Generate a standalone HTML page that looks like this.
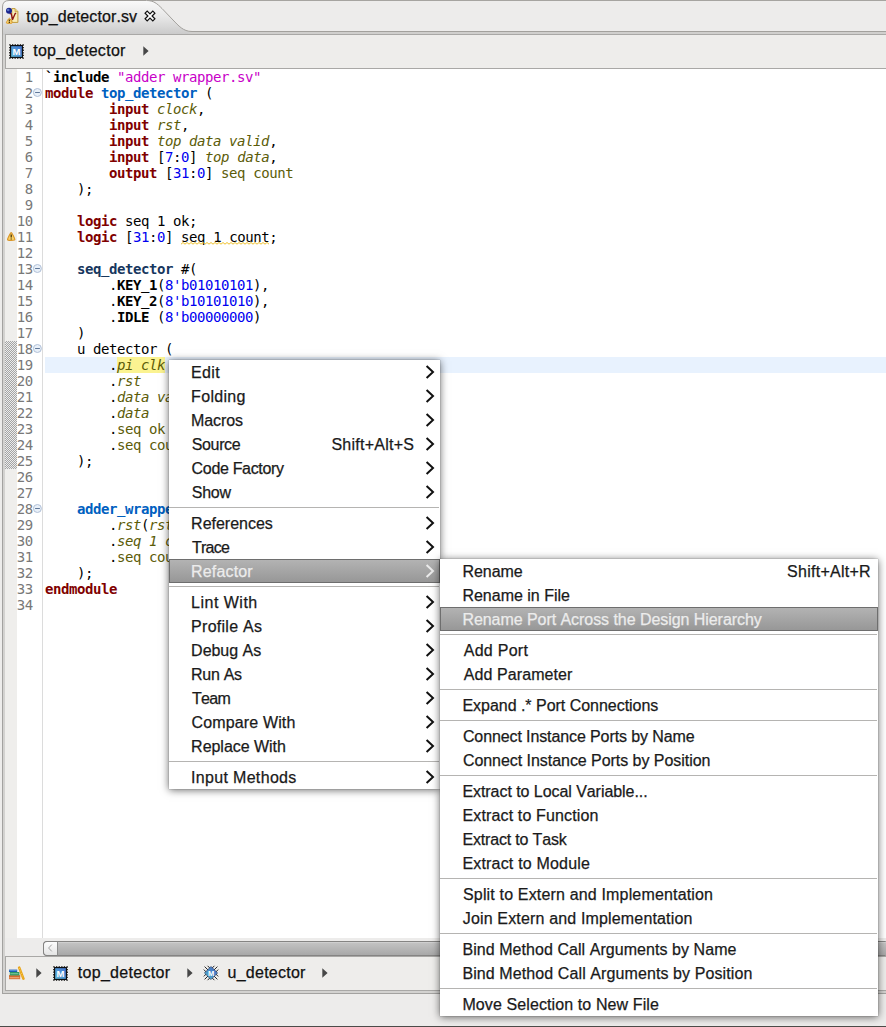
<!DOCTYPE html>
<html><head><meta charset="utf-8"><title>top_detector.sv</title>
<style>
*{box-sizing:border-box;margin:0;padding:0}
html,body{width:886px;height:1027px;overflow:hidden;background:#edeceb}
body{font-kerning:none;position:relative;font-family:"Liberation Sans","DejaVu Sans",sans-serif;font-size:15px;color:#1a1a1a}
.abs{position:absolute}
/* tab bar */
#tabline{left:0;top:0;width:886px;height:35px}
.ui{-webkit-text-stroke:.25px currentColor;font-family:"Liberation Sans","DejaVu Sans",sans-serif;font-size:16px;line-height:20px;white-space:pre;color:#111}
/* breadcrumb */
#crumb{left:5px;top:34px;width:886px;height:35px;border:1px solid #a9a8a6;border-right:0;background:#eeedeb}
/* editor */
#ed{left:5px;top:69px;width:881px;height:869px;background:#fff}
#ruler{left:5px;top:69px;width:12px;height:869px;background:#efeeec}
#rulersel{left:5px;top:341px;width:12px;height:128px;background:#c9c8c6;background-image:repeating-conic-gradient(#a4a4a4 0 25%,#ececec 0 50%);background-size:2px 2px}
#numsep{left:42px;top:69px;width:1px;height:869px;background:#dcdcdc}
.ln{position:absolute;left:17px;width:869px;height:16px;line-height:16px;font-family:"DejaVu Sans Mono","Liberation Mono",monospace;font-size:14px;white-space:pre;overflow:hidden;color:#000}
.ln.cur .tx{background:#e8f2fe}
.no{position:absolute;left:-1.3px;top:0;width:17px;text-align:right;color:#787878;letter-spacing:-.428px}
.tx{position:absolute;left:28px;top:0;width:841px;height:16px;letter-spacing:-.428px}
.u{color:transparent;font-style:inherit}
.k{color:#7f0000;font-weight:bold}
.m{color:#0060c0;font-weight:bold}
.b{font-weight:bold}
.d{color:#17375e}
.s{color:#c800c8}
.n{color:#0000f0}
.p{color:#5c5c08;font-style:italic}
.o{color:#5c5c08}
.h{background:#fbf391;padding-bottom:1px}
.fold{position:absolute;left:32px}
/* scrollbar */
#hs{left:43px;top:941px;width:843px;height:15px;background:#d6d5d3;border:1px solid #858483;border-radius:4px 0 0 4px}
/* bottom crumb */
/* menus */
.menu{position:absolute;background:#fff;box-shadow:0 0 1px rgba(0,0,0,.45),0 1px 8px rgba(0,0,0,.6)}
.mi{-webkit-text-stroke:.25px currentColor;position:relative;height:24px;line-height:24px;font-size:16px;white-space:pre;color:#1a1a1a}
.mi .lb{position:absolute;left:22px;top:.5px}
.mi .acc{position:absolute;top:.5px}
.mi .arr{position:absolute;right:5px;top:5px;color:#111}
.mi.sel{color:#ececec;background:linear-gradient(#b4b4b4,#969696);box-shadow:inset 0 0 0 1px #6e6e6e}
.mi.sel .arr{color:#ececec}
.sep{height:1px;background:#b5b4b2;margin:3px 1px 3px 0}
#m1{left:169px;top:360px;width:271px;height:429px}
#m1 .acc{right:26px}
#m2{left:440px;top:559px;width:438px;height:457px}
#m2 .acc{right:8px}
</style></head><body>
<!-- tab bar -->
<svg id="tabline" class="abs" width="886" height="35" viewBox="0 0 886 35">
<defs><linearGradient id="tg" x1="0" y1="0" x2="0" y2="1"><stop offset="0" stop-color="#fafafa"/><stop offset=".5" stop-color="#e6e6e6"/><stop offset="1" stop-color="#c9c9c9"/></linearGradient></defs>
<path d="M2.5 35 V7 Q2.5 .5 9 .5 H146.5 C153.5 .5 157 3.5 162 8.5 L173 20 C178.5 25.5 183 31.5 192 31.5 H886 V35 Z" fill="url(#tg)"/>
<path d="M192 31.5 H886 V35 H186 Z" fill="#d0cfcd"/>
<path d="M2.5 35 V7 Q2.5 .5 9 .5 H146.5 C153.5 .5 157 3.5 162 8.5 L173 20 C178.5 25.5 183 31.5 192 31.5 H886" fill="none" stroke="#a3a19d" stroke-width="1"/>
<path d="M148 .5 H886" stroke="#a6a4a0" stroke-width="1"/>
</svg>
<div class="abs ui" style="left:26.28px;top:7px;letter-spacing:0.103px">top_detector.sv</div>
<!-- tab file icon -->
<svg class="abs" style="left:5px;top:7px" width="15" height="18" viewBox="0 0 15 18">
<path d="M6.8 1.6 H10 L12.9 4.6 V15.4 H6.8 Z" fill="#f8ecb8" stroke="#c09a3c" stroke-width="1"/>
<path d="M10 1.6 V4.6 H12.9" fill="#e9cf86" stroke="#c7a244" stroke-width=".8"/>
<path d="M4.6 6.6 H6.2 L7.6 12.4 L10.2 6.4 H11.2" fill="none" stroke="#8e1414" stroke-width="1.35" stroke-linejoin="round"/>
<circle cx="4" cy="3.8" r="3" fill="#18238e"/>
<circle cx="3.2" cy="3" r="1.3" fill="#5b78c4"/>
<path d="M4.3 11.2 C4.9 11.2 7.2 15 7.2 15.7 C7.2 16.3 6.8 16.4 4.3 16.4 C1.8 16.4 1.4 16.3 1.4 15.7 C1.4 15 3.7 11.2 4.3 11.2 Z" fill="#f9d36c" stroke="#dc9a2c" stroke-width="1"/>
<path d="M4.3 12.6 V14.4 M4.3 15 V15.9" stroke="#2a1c00" stroke-width="1.1"/>
</svg>
<!-- close X -->
<svg class="abs" style="left:144px;top:10px" width="12" height="12" viewBox="0 0 12 12">
<path d="M1.1 3.2 L3.2 1.1 L6 3.9 L8.8 1.1 L10.9 3.2 L8.1 6 L10.9 8.8 L8.8 10.9 L6 8.1 L3.2 10.9 L1.1 8.8 L3.9 6 Z" fill="#ffffff" stroke="#101010" stroke-width="1.2" stroke-linejoin="miter"/>
</svg>
<!-- breadcrumb -->
<div id="crumb" class="abs"></div>
<svg class="abs" style="left:8.5px;top:43.5px" width="15" height="15" viewBox="0 0 15 15">
<defs><linearGradient id="mg1" x1="1" y1="0" x2="0" y2="1"><stop offset="0" stop-color="#3f6fd0"/><stop offset="1" stop-color="#62bbd8"/></linearGradient></defs>
<rect x="1" y="1" width="13" height="13" fill="none" stroke="#0a0a0a" stroke-width="1.6" stroke-dasharray="1.3 1.3" stroke-dashoffset=".6"/>
<rect x="1.6" y="1.6" width="11.8" height="11.8" fill="url(#mg1)" stroke="#0a0a0a" stroke-width="1.1"/>
<text x="7.5" y="11.3" font-family="Liberation Sans,sans-serif" font-size="9.5" font-weight="bold" fill="#fff" text-anchor="middle">M</text>
</svg>
<div class="abs ui" style="left:33.18px;top:41px;letter-spacing:0.3px">top_detector</div>
<svg class="abs" style="left:143px;top:45.7px" width="6" height="10" viewBox="0 0 6 10"><path d="M.3 .2 L5.6 5 L.3 9.8z" fill="#474747"/></svg>
<!-- editor -->
<div id="ed" class="abs"></div>
<div id="ruler" class="abs"></div>
<div id="rulersel" class="abs"></div>
<div id="numsep" class="abs"></div>
<div class="ln" style="top:69px"><span class="no">1</span><span class="tx"><span class="b">`include</span> <span class="s">"adder<i class="u">_</i>wrapper.sv"</span></span></div>
<div class="ln" style="top:85px"><span class="no">2</span><span class="tx"><span class="k">module</span> <span class="m">top_detector</span> (</span></div>
<div class="ln" style="top:101px"><span class="no">3</span><span class="tx">        <span class="k">input</span> <span class="p">clock</span>,</span></div>
<div class="ln" style="top:117px"><span class="no">4</span><span class="tx">        <span class="k">input</span> <span class="p">rst</span>,</span></div>
<div class="ln" style="top:133px"><span class="no">5</span><span class="tx">        <span class="k">input</span> <span class="p">top<i class="u">_</i>data<i class="u">_</i>valid</span>,</span></div>
<div class="ln" style="top:149px"><span class="no">6</span><span class="tx">        <span class="k">input</span> [<span class="n">7</span>:<span class="n">0</span>] <span class="p">top<i class="u">_</i>data</span>,</span></div>
<div class="ln" style="top:165px"><span class="no">7</span><span class="tx">        <span class="k">output</span> [<span class="n">31</span>:<span class="n">0</span>] <span class="o">seq<i class="u">_</i>count</span></span></div>
<div class="ln" style="top:181px"><span class="no">8</span><span class="tx">    );</span></div>
<div class="ln" style="top:197px"><span class="no">9</span><span class="tx"></span></div>
<div class="ln" style="top:213px"><span class="no">10</span><span class="tx">    <span class="k">logic</span> seq<i class="u">_</i>1<i class="u">_</i>ok;</span></div>
<div class="ln" style="top:229px"><span class="no">11</span><span class="tx">    <span class="k">logic</span> [<span class="n">31</span>:<span class="n">0</span>] <span class="w">seq<i class="u">_</i>1<i class="u">_</i>count</span>;</span></div>
<div class="ln" style="top:245px"><span class="no">12</span><span class="tx"></span></div>
<div class="ln" style="top:261px"><span class="no">13</span><span class="tx">    <span class="m d">seq_detector</span> #(</span></div>
<div class="ln" style="top:277px"><span class="no">14</span><span class="tx">        .<span class="b">KEY_1</span>(<span class="n">8'b01010101</span>),</span></div>
<div class="ln" style="top:293px"><span class="no">15</span><span class="tx">        .<span class="b">KEY_2</span>(<span class="n">8'b10101010</span>),</span></div>
<div class="ln" style="top:309px"><span class="no">16</span><span class="tx">        .<span class="b">IDLE</span> (<span class="n">8'b00000000</span>)</span></div>
<div class="ln" style="top:325px"><span class="no">17</span><span class="tx">    )</span></div>
<div class="ln" style="top:341px"><span class="no">18</span><span class="tx">    u<i class="u">_</i>detector (</span></div>
<div class="ln cur" style="top:357px"><span class="no">19</span><span class="tx">        .<span class="p h">pi<i class="u">_</i>clk</span></span></div>
<div class="ln" style="top:373px"><span class="no">20</span><span class="tx">        .<span class="p">rst</span></span></div>
<div class="ln" style="top:389px"><span class="no">21</span><span class="tx">        .<span class="p">data<i class="u">_</i>valid</span></span></div>
<div class="ln" style="top:405px"><span class="no">22</span><span class="tx">        .<span class="p">data</span></span></div>
<div class="ln" style="top:421px"><span class="no">23</span><span class="tx">        .<span class="o">seq<i class="u">_</i>ok</span></span></div>
<div class="ln" style="top:437px"><span class="no">24</span><span class="tx">        .<span class="o">seq<i class="u">_</i>count</span></span></div>
<div class="ln" style="top:453px"><span class="no">25</span><span class="tx">    );</span></div>
<div class="ln" style="top:469px"><span class="no">26</span><span class="tx"></span></div>
<div class="ln" style="top:485px"><span class="no">27</span><span class="tx"></span></div>
<div class="ln" style="top:501px"><span class="no">28</span><span class="tx">    <span class="m">adder_wrapper</span></span></div>
<div class="ln" style="top:517px"><span class="no">29</span><span class="tx">        .<span class="p">rst</span>(<span class="p">rst</span></span></div>
<div class="ln" style="top:533px"><span class="no">30</span><span class="tx">        .<span class="p">seq<i class="u">_</i>1<i class="u">_</i>count</span></span></div>
<div class="ln" style="top:549px"><span class="no">31</span><span class="tx">        .<span class="o">seq<i class="u">_</i>count</span></span></div>
<div class="ln" style="top:565px"><span class="no">32</span><span class="tx">    );</span></div>
<div class="ln" style="top:581px"><span class="no">33</span><span class="tx"><span class="k">endmodule</span></span></div>
<div class="ln" style="top:597px"><span class="no">34</span><span class="tx"></span></div>

<svg class="fold" style="top:88px" width="11" height="10" viewBox="0 0 11 10"><circle cx="5.4" cy="4.5" r="4" fill="#e9f0f8" stroke="#b0c0d8" stroke-width="1"/><path d="M3.1 4.5h4.8" stroke="#60789a" stroke-width="1"/></svg>
<svg class="fold" style="top:264px" width="11" height="10" viewBox="0 0 11 10"><circle cx="5.4" cy="4.5" r="4" fill="#e9f0f8" stroke="#b0c0d8" stroke-width="1"/><path d="M3.1 4.5h4.8" stroke="#60789a" stroke-width="1"/></svg>
<svg class="fold" style="top:344px" width="11" height="10" viewBox="0 0 11 10"><circle cx="5.4" cy="4.5" r="4" fill="#e9f0f8" stroke="#b0c0d8" stroke-width="1"/><path d="M3.1 4.5h4.8" stroke="#60789a" stroke-width="1"/></svg>
<svg class="fold" style="top:504px" width="11" height="10" viewBox="0 0 11 10"><circle cx="5.4" cy="4.5" r="4" fill="#e9f0f8" stroke="#b0c0d8" stroke-width="1"/><path d="M3.1 4.5h4.8" stroke="#60789a" stroke-width="1"/></svg>

<!-- warning marker line 11 -->
<svg class="abs" style="left:6px;top:231px" width="11" height="11" viewBox="0 0 11 11">
<path d="M5.2 1.6 C5.9 1.6 8.9 7.4 8.9 8.6 C8.9 9.3 8.4 9.5 5.2 9.5 C2 9.5 1.5 9.3 1.5 8.6 C1.5 7.4 4.5 1.6 5.2 1.6 Z" fill="#f9d065" stroke="#d9962a" stroke-width="1.1"/>
<path d="M5.2 3.6 V6.6 M5.2 7.4 V8.5" stroke="#3a2800" stroke-width="1.2"/>
</svg>
<svg class="abs" style="left:180px;top:241px" width="90" height="5" viewBox="0 0 90 5"><path d="M1 3.2 l2 -1.7 l2 1.7 l2 -1.7 l2 1.7 l2 -1.7 l2 1.7 l2 -1.7 l2 1.7 l2 -1.7 l2 1.7 l2 -1.7 l2 1.7 l2 -1.7 l2 1.7 l2 -1.7 l2 1.7 l2 -1.7 l2 1.7 l2 -1.7 l2 1.7 l2 -1.7 l2 1.7 l2 -1.7 l2 1.7 l2 -1.7 l2 1.7 l2 -1.7 l2 1.7 l2 -1.7 l2 1.7 l2 -1.7 l2 1.7 l2 -1.7 l2 1.7 l2 -1.7 l2 1.7 l2 -1.7 l2 1.7 l2 -1.7 l2 1.7 l2 -1.7 l2 1.7 l2 -1.7 l2 1.7" fill="none" stroke="#efc12a" stroke-width="1"/></svg>
<!-- h scrollbar -->
<div id="hs" class="abs"></div>
<div class="abs" style="left:43px;top:941px;width:15px;height:15px;border:1px solid #858483;border-right-color:#8c8c8c;border-radius:4px 0 0 4px;background:linear-gradient(#fdfdfd,#e4e4e4)"></div>
<svg class="abs" style="left:47px;top:944px" width="6" height="8" viewBox="0 0 6 8"><path d="M4.8 .6 L1.6 4 L4.8 7.4" fill="none" stroke="#a0a0a0" stroke-width="1"/></svg>
<div class="abs" style="left:58px;top:942px;width:828px;height:13px;background:linear-gradient(#c4c4c4,#a8a8a8);box-shadow:inset 0 1px 0 #cfcfcf"></div>
<!-- bottom crumb -->
<div class="abs" style="left:2px;top:34px;width:1px;height:960px;background:#a3a2a0"></div>
<div class="abs" style="left:3px;top:35px;width:2px;height:958px;background:#d3d2d0"></div>
<div class="abs" style="left:5px;top:956px;width:881px;height:35px;border:1px solid #a9a8a6;border-right:0;background:#eeedeb"></div>
<div class="abs" style="left:3px;top:991px;width:883px;height:2px;background:#d3d2d0"></div>
<div class="abs" style="left:2px;top:993px;width:884px;height:1px;background:#a3a2a0"></div>
<div class="abs" style="left:0;top:1026px;width:886px;height:1px;background:#4c4b49"></div>
<svg class="abs" style="left:8px;top:966px" width="17" height="14" viewBox="0 0 17 14">
<rect x="1" y="9.4" width="11.2" height="3.8" fill="#d9783a"/><rect x="1" y="9.4" width="11.2" height="1" fill="#c65a1e"/><rect x="1.6" y="11" width="9.6" height="1.2" fill="#eaa070"/>
<rect x="1.8" y="6" width="9.6" height="3.4" fill="#2f9a62"/><rect x="2.4" y="7.2" width="8" height="1" fill="#7cc8a0"/>
<rect x="1" y="3.6" width="8.2" height="2.4" fill="#1f5fb4"/><rect x="1.4" y="4.2" width="7.4" height=".8" fill="#5c9ae0"/>
<path d="M11.2 1.6 L15.4 12.6" stroke="#e9a51c" stroke-width="2.6" stroke-linecap="round"/>
<path d="M11.4 2 L15.2 12.2" stroke="#f8d050" stroke-width=".9" stroke-dasharray="1.2 1.4"/>
</svg>
<svg class="abs" style="left:36px;top:967.6px" width="6" height="10" viewBox="0 0 6 10"><path d="M.3 .2 L5.6 5 L.3 9.8z" fill="#474747"/></svg>
<svg class="abs" style="left:52.7px;top:965.5px" width="15" height="15" viewBox="0 0 15 15">
<defs><linearGradient id="mg2" x1="1" y1="0" x2="0" y2="1"><stop offset="0" stop-color="#3f6fd0"/><stop offset="1" stop-color="#62bbd8"/></linearGradient></defs>
<rect x="1" y="1" width="13" height="13" fill="none" stroke="#0a0a0a" stroke-width="1.6" stroke-dasharray="1.3 1.3" stroke-dashoffset=".6"/>
<rect x="1.6" y="1.6" width="11.8" height="11.8" fill="url(#mg2)" stroke="#0a0a0a" stroke-width="1.1"/>
<text x="7.5" y="11.3" font-family="Liberation Sans,sans-serif" font-size="9.5" font-weight="bold" fill="#fff" text-anchor="middle">M</text>
</svg>
<div class="abs ui" style="left:77.78px;top:963px;letter-spacing:0.3px">top_detector</div>
<svg class="abs" style="left:187px;top:967.6px" width="6" height="10" viewBox="0 0 6 10"><path d="M.3 .2 L5.6 5 L.3 9.8z" fill="#474747"/></svg>
<svg class="abs" style="left:203px;top:965px" width="16" height="16" viewBox="0 0 16 16">
<defs><linearGradient id="ig" x1="1" y1="0" x2="0" y2="1"><stop offset="0" stop-color="#3f63c8"/><stop offset="1" stop-color="#55b6c8"/></linearGradient></defs>
<path d="M1.6 1.6 L14.4 14.4 M14.4 1.6 L1.6 14.4 M4.6 .8 L15.2 11.4 M.8 4.6 L11.4 15.2 M11.4 .8 L.8 11.4 M15.2 4.6 L4.6 15.2" stroke="#111" stroke-width=".9"/>
<path d="M8 1.4 L14.6 8 L8 14.6 L1.4 8 Z" fill="url(#ig)" stroke="#2a3a5a" stroke-width=".6"/>
<text x="8" y="10.7" font-family="Liberation Sans,sans-serif" font-size="7.5" font-weight="bold" fill="#fff" text-anchor="middle">M</text>
</svg>
<div class="abs ui" style="left:227.59px;top:963px;letter-spacing:0.249px">u_detector</div>
<svg class="abs" style="left:322px;top:967.6px" width="6" height="10" viewBox="0 0 6 10"><path d="M.3 .2 L5.6 5 L.3 9.8z" fill="#474747"/></svg>
<!-- menus -->
<div id="m1" class="menu">
<div class="mi"><span class="lb" style="left:22.11px;letter-spacing:0.303px">Edit</span><svg class="arr" width="10" height="14" viewBox="0 0 10 14"><path d="M1.6 1 L8 7 L1.6 13" fill="none" stroke="currentColor" stroke-width="2"/></svg></div>
<div class="mi"><span class="lb" style="left:22.11px;letter-spacing:0.303px">Folding</span><svg class="arr" width="10" height="14" viewBox="0 0 10 14"><path d="M1.6 1 L8 7 L1.6 13" fill="none" stroke="currentColor" stroke-width="2"/></svg></div>
<div class="mi"><span class="lb" style="left:22.11px;letter-spacing:-0.122px">Macros</span><svg class="arr" width="10" height="14" viewBox="0 0 10 14"><path d="M1.6 1 L8 7 L1.6 13" fill="none" stroke="currentColor" stroke-width="2"/></svg></div>
<div class="mi"><span class="lb" style="left:22.70px;letter-spacing:-0.342px">Source</span><span class="acc" style="left:162.40px;letter-spacing:0.246px">Shift+Alt+S</span><svg class="arr" width="10" height="14" viewBox="0 0 10 14"><path d="M1.6 1 L8 7 L1.6 13" fill="none" stroke="currentColor" stroke-width="2"/></svg></div>
<div class="mi"><span class="lb" style="left:22.61px;letter-spacing:-0.331px">Code Factory</span><svg class="arr" width="10" height="14" viewBox="0 0 10 14"><path d="M1.6 1 L8 7 L1.6 13" fill="none" stroke="currentColor" stroke-width="2"/></svg></div>
<div class="mi"><span class="lb" style="left:22.70px;letter-spacing:-0.195px">Show</span><svg class="arr" width="10" height="14" viewBox="0 0 10 14"><path d="M1.6 1 L8 7 L1.6 13" fill="none" stroke="currentColor" stroke-width="2"/></svg></div>
<div class="sep"></div>
<div class="mi"><span class="lb" style="left:22.11px;letter-spacing:-0.009px">References</span><svg class="arr" width="10" height="14" viewBox="0 0 10 14"><path d="M1.6 1 L8 7 L1.6 13" fill="none" stroke="currentColor" stroke-width="2"/></svg></div>
<div class="mi"><span class="lb" style="left:23.07px;letter-spacing:-0.77px">Trace</span><svg class="arr" width="10" height="14" viewBox="0 0 10 14"><path d="M1.6 1 L8 7 L1.6 13" fill="none" stroke="currentColor" stroke-width="2"/></svg></div>
<div class="mi sel"><span class="lb" style="left:22.11px;letter-spacing:0.151px">Refactor</span><svg class="arr" width="10" height="14" viewBox="0 0 10 14"><path d="M1.6 1 L8 7 L1.6 13" fill="none" stroke="currentColor" stroke-width="2"/></svg></div>
<div class="sep"></div>
<div class="mi"><span class="lb" style="left:22.11px;letter-spacing:0.482px">Lint With</span><svg class="arr" width="10" height="14" viewBox="0 0 10 14"><path d="M1.6 1 L8 7 L1.6 13" fill="none" stroke="currentColor" stroke-width="2"/></svg></div>
<div class="mi"><span class="lb" style="left:22.11px;letter-spacing:0.264px">Profile As</span><svg class="arr" width="10" height="14" viewBox="0 0 10 14"><path d="M1.6 1 L8 7 L1.6 13" fill="none" stroke="currentColor" stroke-width="2"/></svg></div>
<div class="mi"><span class="lb" style="left:22.11px;letter-spacing:-0.032px">Debug As</span><svg class="arr" width="10" height="14" viewBox="0 0 10 14"><path d="M1.6 1 L8 7 L1.6 13" fill="none" stroke="currentColor" stroke-width="2"/></svg></div>
<div class="mi"><span class="lb" style="left:22.11px;letter-spacing:-0.306px">Run As</span><svg class="arr" width="10" height="14" viewBox="0 0 10 14"><path d="M1.6 1 L8 7 L1.6 13" fill="none" stroke="currentColor" stroke-width="2"/></svg></div>
<div class="mi"><span class="lb" style="left:23.07px;letter-spacing:-0.711px">Team</span><svg class="arr" width="10" height="14" viewBox="0 0 10 14"><path d="M1.6 1 L8 7 L1.6 13" fill="none" stroke="currentColor" stroke-width="2"/></svg></div>
<div class="mi"><span class="lb" style="left:22.61px;letter-spacing:0.132px">Compare With</span><svg class="arr" width="10" height="14" viewBox="0 0 10 14"><path d="M1.6 1 L8 7 L1.6 13" fill="none" stroke="currentColor" stroke-width="2"/></svg></div>
<div class="mi"><span class="lb" style="left:22.11px;letter-spacing:-0.032px">Replace With</span><svg class="arr" width="10" height="14" viewBox="0 0 10 14"><path d="M1.6 1 L8 7 L1.6 13" fill="none" stroke="currentColor" stroke-width="2"/></svg></div>
<div class="sep"></div>
<div class="mi"><span class="lb" style="left:21.95px;letter-spacing:0.334px">Input Methods</span><svg class="arr" width="10" height="14" viewBox="0 0 10 14"><path d="M1.6 1 L8 7 L1.6 13" fill="none" stroke="currentColor" stroke-width="2"/></svg></div>
</div>
<div id="m2" class="menu">
<div class="mi"><span class="lb" style="left:22.41px;letter-spacing:-0.041px">Rename</span><span class="acc" style="left:347.10px;letter-spacing:0.259px">Shift+Alt+R</span></div>
<div class="mi"><span class="lb" style="left:22.41px;letter-spacing:-0.002px">Rename in File</span></div>
<div class="mi sel"><span class="lb" style="left:22.41px;letter-spacing:-0.054px">Rename Port Across the Design Hierarchy</span></div>
<div class="sep"></div>
<div class="mi"><span class="lb" style="left:23.69px;letter-spacing:0.277px">Add Port</span></div>
<div class="mi"><span class="lb" style="left:23.69px;letter-spacing:0.095px">Add Parameter</span></div>
<div class="sep"></div>
<div class="mi"><span class="lb" style="left:22.41px;letter-spacing:-0.025px">Expand .* Port Connections</span></div>
<div class="sep"></div>
<div class="mi"><span class="lb" style="left:22.91px;letter-spacing:-0.107px">Connect Instance Ports by Name</span></div>
<div class="mi"><span class="lb" style="left:22.91px;letter-spacing:-0.046px">Connect Instance Ports by Position</span></div>
<div class="sep"></div>
<div class="mi"><span class="lb" style="left:22.41px;letter-spacing:-0.057px">Extract to Local Variable...</span></div>
<div class="mi"><span class="lb" style="left:22.41px;letter-spacing:0.151px">Extract to Function</span></div>
<div class="mi"><span class="lb" style="left:22.41px;letter-spacing:-0.168px">Extract to Task</span></div>
<div class="mi"><span class="lb" style="left:22.41px;letter-spacing:0.186px">Extract to Module</span></div>
<div class="sep"></div>
<div class="mi"><span class="lb" style="left:23.00px;letter-spacing:0.165px">Split to Extern and Implementation</span></div>
<div class="mi"><span class="lb" style="left:22.78px;letter-spacing:0.159px">Join Extern and Implementation</span></div>
<div class="sep"></div>
<div class="mi"><span class="lb" style="left:22.41px;letter-spacing:0.059px">Bind Method Call Arguments by Name</span></div>
<div class="mi"><span class="lb" style="left:22.41px;letter-spacing:0.096px">Bind Method Call Arguments by Position</span></div>
<div class="sep"></div>
<div class="mi"><span class="lb" style="left:22.41px;letter-spacing:0.105px">Move Selection to New File</span></div>
</div>
</body></html>
